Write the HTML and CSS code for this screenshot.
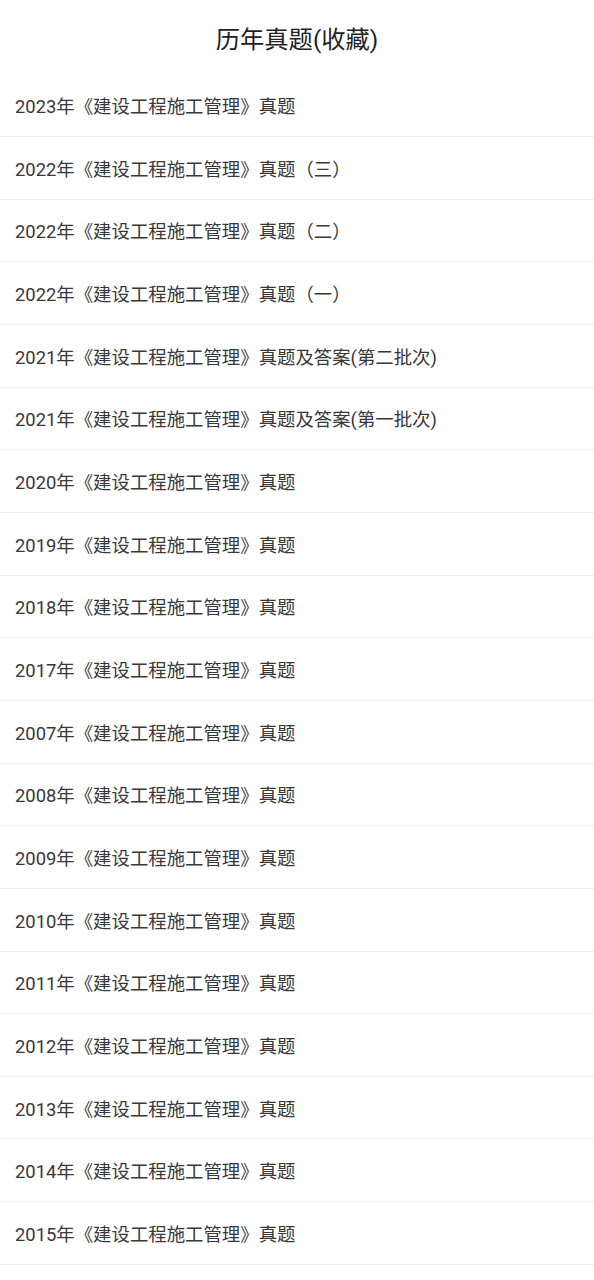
FILE: index.html
```html
<!DOCTYPE html>
<html lang="zh-CN">
<head>
  <meta charset="UTF-8" />
  <meta name="viewport" content="width=device-width, initial-scale=1" />
  <title>历年真题(收藏)</title>
  <link rel="stylesheet" href="styles.css">
</head>
<body>
  <header class="topbar">
    <h1>历年真题(收藏)</h1>
  </header>

  <ul class="paper-list">
    <li>2023年《建设工程施工管理》真题</li>
    <li>2022年《建设工程施工管理》真题（三）</li>
    <li>2022年《建设工程施工管理》真题（二）</li>
    <li>2022年《建设工程施工管理》真题（一）</li>
    <li>2021年《建设工程施工管理》真题及答案(第二批次)</li>
    <li>2021年《建设工程施工管理》真题及答案(第一批次)</li>
    <li>2020年《建设工程施工管理》真题</li>
    <li>2019年《建设工程施工管理》真题</li>
    <li>2018年《建设工程施工管理》真题</li>
    <li>2017年《建设工程施工管理》真题</li>
    <li>2007年《建设工程施工管理》真题</li>
    <li>2008年《建设工程施工管理》真题</li>
    <li>2009年《建设工程施工管理》真题</li>
    <li>2010年《建设工程施工管理》真题</li>
    <li>2011年《建设工程施工管理》真题</li>
    <li>2012年《建设工程施工管理》真题</li>
    <li>2013年《建设工程施工管理》真题</li>
    <li>2014年《建设工程施工管理》真题</li>
    <li>2015年《建设工程施工管理》真题</li>
  </ul>
</body>
</html>
```

FILE: styles.css
```css
* {
  margin: 0;
  padding: 0;
  box-sizing: border-box;
}

body {
  background: #ffffff;
  font-family: Roboto, "Noto Sans CJK SC", sans-serif;
  color: #383838;
}

.topbar {
  height: 74.33px;
  display: flex;
  justify-content: center;
  align-items: center;
}

.topbar h1 {
  font-size: 24.3px;
  font-weight: 400;
  color: #222222;
}

.paper-list {
  list-style: none;
}

.paper-list li {
  height: 62.67px;
  display: flex;
  align-items: center;
  padding: 0 15px;
  font-size: 18.4px;
  border-bottom: 1px solid #eeeeee;
}
```
